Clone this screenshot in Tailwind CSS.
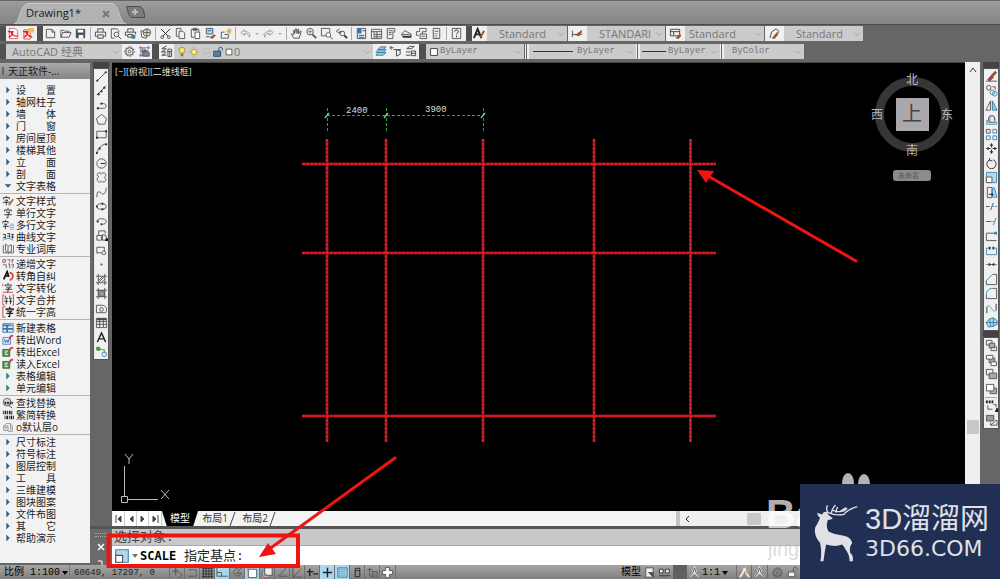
<!DOCTYPE html>
<html lang="zh-CN">
<head>
  <meta charset="UTF-8">
  <meta name="viewport" content="width=device-width, initial-scale=1">
  <title>Drawing1*</title>
  <script src="https://cdn.jsdelivr.net/npm/@tailwindcss/browser@4"></script>
</head>
<body class="relative flex min-h-screen flex-col overflow-x-hidden bg-[#666] font-['Open_Sans','Noto_Sans_CJK_SC',sans-serif] text-[10px] text-[#333]">

  <!-- Icon set, all on a 14x14 grid -->
  <svg class="hidden">
    <symbol id="pdf" viewBox="0 0 14 14"><path d="M2.500 1.500h6l3 3v8h-9z" fill="#fff" stroke="#c66"/><path d="M1 5h6M4 5c1 3 4 5 7 5M6 5c0 3-2 5-4 6" stroke="#d22" stroke-width="1.500"/></symbol>
    <symbol id="pdf2" viewBox="0 0 14 14"><path d="M2 3h7v10H2z" fill="#fdd" stroke="#c66"/><path d="M7 1h6v5H7z" fill="#f5c242" stroke="none"/><path d="M1 5h6M4 5c1 3 4 5 7 6M6 5c0 3-2 5-4 6" stroke="#d22" stroke-width="1.500"/></symbol>
    <symbol id="new" viewBox="0 0 14 14"><path d="M2.500 2.500h6l3 3v6h-9zM8.500 2.500v3h3"/></symbol>
    <symbol id="open" viewBox="0 0 14 14"><path d="M2 11V3.500h3l1 1h5V6M2 11l2-5h9l-2 5z"/></symbol>
    <symbol id="save" viewBox="0 0 14 14"><path d="M2.500 2.500h9v9h-9z" fill="#456" stroke="#345"/><path d="M4 3h6v3H4zM5 8.500h5V12H5z" fill="#fff" stroke="none"/></symbol>
    <symbol id="print" viewBox="0 0 14 14"><path d="M4 5V2h6v3M3 10H1.500V5.500h11V10H11M4 8.500h6V12H4z" stroke="#444"/></symbol>
    <symbol id="preview" viewBox="0 0 14 14"><path d="M6 12H2.500V2h6l2 2v2"/><circle cx="8" cy="8" r="2.500"/><path d="M10 10l3 3" stroke="#333"/></symbol>
    <symbol id="plot" viewBox="0 0 14 14"><path d="M4 5V2h6v3M3 9H1.500V5.500h11V8M4 8h5v3H4z" stroke="#444"/><circle cx="10" cy="10.500" r="2.500" fill="#3b87b5" stroke="none"/></symbol>
    <symbol id="globe" viewBox="0 0 14 14"><path d="M2 4l6 1v7l-5-1z"/><circle cx="8.500" cy="6" r="4" fill="#e9e3b8"/><path d="M5 6h7M8.500 2v8"/></symbol>
    <symbol id="cut" viewBox="0 0 14 14"><path d="M2 2l8 8M12 2L4 10" stroke="#222"/><circle cx="3.500" cy="11" r="1.500"/><circle cx="10.500" cy="11" r="1.500"/></symbol>
    <symbol id="copy" viewBox="0 0 14 14"><path d="M5 10H2.500V1.500h5V4M5.500 4.500h4l2 2v6h-6z"/></symbol>
    <symbol id="paste" viewBox="0 0 14 14"><path d="M6 11H2.500V2.500h8V5" /><path d="M4.500 1.500h4v2h-4z" fill="#666"/><path d="M6.500 5.500h5v7h-5z" fill="#fff"/></symbol>
    <symbol id="match" viewBox="0 0 14 14"><path d="M2.500 1.500h7v6h-7z" fill="#bcd8e8" stroke="#357"/><path d="M4 4h4" stroke="#357"/><path d="M6 11l5-3 2 1-4 4z" fill="#a0562d" stroke="none"/><path d="M2 10.500h4" stroke="#357"/></symbol>
    <symbol id="block" viewBox="0 0 14 14"><path d="M2.500 11.500v-6H6M2 12h8V8M6 8h4"/><path d="M11 1v7M7.500 4.500h6M9 2l4 5M13 2L9 7" stroke="#e0a030"/></symbol>
    <symbol id="undo" viewBox="0 0 14 14"><path d="M6 3L2 6l4 3V7c3 0 5 1 5 4 2-4 0-6-5-6z" stroke="#999"/></symbol>
    <symbol id="redo" viewBox="0 0 14 14"><path d="M8 3l4 3-4 3V7c-3 0-5 1-5 4-2-4 0-6 5-6z" stroke="#999"/></symbol>
    <symbol id="dot" viewBox="0 0 14 14"><path d="M4 6h6l-3 3z" fill="#999" stroke="none"/></symbol>
    <symbol id="pan" viewBox="0 0 14 14"><path d="M4 12L1.500 7.500 4 8V3.500h1V7l1-5h1l.5 5 1-4.500h1L9 7.500l2-3h1L10 12z"/></symbol>
    <symbol id="zoomrt" viewBox="0 0 14 14"><circle cx="5.500" cy="5" r="3.500"/><path d="M8 8l4 4" stroke-width="2"/><path d="M3 5h5M5.500 3v4" stroke="#48a"/></symbol>
    <symbol id="zoomwin" viewBox="0 0 14 14"><path d="M7 9.500H1.500v-8h9V6"/><circle cx="9" cy="8.500" r="2.500" fill="#fff"/><path d="M11 10.500l2.500 2.500" stroke="#333"/></symbol>
    <symbol id="zoomprev" viewBox="0 0 14 14"><path d="M5 2L1.500 4.500 5 7V5h3"/><circle cx="8" cy="7" r="2.500"/><path d="M10 9l3 3" stroke="#333" stroke-width="2"/></symbol>
    <symbol id="props" viewBox="0 0 14 14"><path d="M2.500 1.500h9v11h-9z" stroke="#357"/><path d="M3 2h4v5H3z" fill="#3c77a0" stroke="none"/><path d="M8 4h3M4 9h6M4 11h6" stroke="#357"/></symbol>
    <symbol id="palette" viewBox="0 0 14 14"><path d="M1.500 2.500h11v10h-11zM1.500 5h11M4.500 5v7M7.500 5v7M5 8h7M5 10.500h7"/></symbol>
    <symbol id="tool" viewBox="0 0 14 14"><path d="M2.500 1.500h8v4h-2v7h-6zM4 4h5M4 6h3M4 8h3"/></symbol>
    <symbol id="sheet" viewBox="0 0 14 14"><path d="M1.500 8L5 4l7 3.500v3H3zM2 8h8l2 2"/><path d="M3 10.500h9" stroke="#333" stroke-width="2"/></symbol>
    <symbol id="markup" viewBox="0 0 14 14"><path d="M4 9H1.500V5H5V1.500h7V5H8v3M5.500 7.500h7v5h-7zM7 10h4"/></symbol>
    <symbol id="calc" viewBox="0 0 14 14"><path d="M3.500 1.500h7v11h-7zM5 4.500h4"/><path d="M5 7h4M5 9h4M5 11h4" stroke-dasharray="1"/></symbol>
    <symbol id="help" viewBox="0 0 14 14"><path d="M2.500 1.500h9v11h-9z"/><path d="M5 5c0-2.500 4-2.500 4 0 0 1.500-2 1.500-2 3M7 9.500v1.500" stroke="#222"/></symbol>
    <symbol id="gear" viewBox="0 0 14 14"><circle cx="7" cy="7" r="5" stroke-dasharray="2 1"/><circle cx="7" cy="7" r="4"/><circle cx="7" cy="7" r="1.500"/></symbol>
    <symbol id="wsave" viewBox="0 0 14 14"><path d="M1 3h12M1 11h4M3 1v12M11 1v4" stroke="#679"/><path d="M5 6h5l2 2v4H5z" fill="#789"/><circle cx="6" cy="6" r="2"/></symbol>
    <symbol id="layers" viewBox="0 0 14 14"><path d="M7 1L2 4h5M6 5L1.500 7.500H7M6 9l-4 2h5M8.500 4.500h4v8h-4zM8.500 7h4M10.500 7v5" stroke="#444"/></symbol>
    <symbol id="bulb" viewBox="0 0 14 14"><circle cx="7" cy="5" r="3.500" fill="#f7e27a" stroke="#a98b2c"/><path d="M5.500 9h3v3h-3z" fill="#777"/></symbol>
    <symbol id="sun" viewBox="0 0 14 14"><circle cx="7" cy="7" r="3" fill="#f9ec9c" stroke="#b49a3c"/><path d="M7 1v2M7 11v2M1 7h2M11 7h2M3 3l1 1M10 10l1 1M11 3l-1 1M3 11l1-1" stroke="#b49a3c"/></symbol>
    <symbol id="vpfreeze" viewBox="0 0 14 14"><path d="M3 3h8v5M3 3v5h4M7 8h5v4H7z" stroke="#bbb"/></symbol>
    <symbol id="lock" viewBox="0 0 14 14"><path d="M2 6h8v6H2z" fill="#4c86a8" stroke="#246"/><path d="M8 6V3c0-2 4-2 4 0v2" stroke="#246"/></symbol>
    <symbol id="square" viewBox="0 0 14 14"><path d="M3 3h8v8H3z" fill="#fff" stroke="#333"/></symbol>
    <symbol id="lay1" viewBox="0 0 14 14"><path d="M2 8l3-3h8l-3 3zM2 11l3-3h8l-3 3zM4 5l3-3h6l-3 3z" fill="#9fc6de" stroke="#357fa8"/></symbol>
    <symbol id="lay2" viewBox="0 0 14 14"><path d="M1 3h4M3 1L1 3l2 2M5 5h8M7 5l5 1v4l-4 2v-6" stroke="#444"/></symbol>
    <symbol id="lay3" viewBox="0 0 14 14"><path d="M3 4l3-2.500h5L8 4zM2 7.500h5M2 11h5M8 6.500h4.500v5H8zM8 9h4" stroke="#444"/></symbol>
    <symbol id="chev" viewBox="0 0 14 14"><path d="M3 5l4 4 4-4" stroke="#999"/></symbol>
    <symbol id="textstyle" viewBox="0 0 14 14"><path d="M1 12L5 2l4 10M2.500 8h5" stroke="#222" stroke-width="2"/><path d="M8 11l4-7" stroke="#9a5527" stroke-width="2"/></symbol>
    <symbol id="dimstyle" viewBox="0 0 14 14"><path d="M1.500 4v7M1 8h11M11 4v3" stroke="#555"/><path d="M4 9l8-6-3 7z" fill="#9a5527" stroke="none"/></symbol>
    <symbol id="tablestyle" viewBox="0 0 14 14"><path d="M1.500 2.500h10v7h-10zM1.500 5h10M5 5v4" stroke="#444"/><path d="M7 12l5-5 1 3-3 3z" fill="#9a5527" stroke="none"/></symbol>
    <symbol id="mlstyle" viewBox="0 0 14 14"><path d="M2 12l2-7 5-3 3 3-3 3" stroke="#444"/><path d="M4 12l6-7 1 3-4 5z" fill="#9a5527" stroke="none"/></symbol>

    <!-- draw tools -->
    <symbol id="line" viewBox="0 0 14 14"><path d="M2 12L12 2"/><path d="M1.500 11.500h2M10.500 2.500h2" stroke="#222" stroke-width="2"/></symbol>
    <symbol id="xline" viewBox="0 0 14 14"><path d="M2 12L12 2"/><path d="M3 11h2M6 8h2M9 4h2" stroke="#222" stroke-width="2"/></symbol>
    <symbol id="pline" viewBox="0 0 14 14"><path d="M3 10h6c4 0 4-5 0-5H6"/><path d="M2 10h2M6 5h2" stroke="#222" stroke-width="2"/></symbol>
    <symbol id="polygon" viewBox="0 0 14 14"><path d="M7 1.500L12.500 6l-2 6h-7l-2-6z"/></symbol>
    <symbol id="rect" viewBox="0 0 14 14"><path d="M2 3.500h10v7H2z"/><path d="M1 10.500h2M11 3.500h2" stroke="#222" stroke-width="2"/></symbol>
    <symbol id="arc" viewBox="0 0 14 14"><path d="M2 12C3 7 7 3 12 2"/><path d="M1 12h2M4 7h2M11 2.500h2" stroke="#222" stroke-width="2"/></symbol>
    <symbol id="circle" viewBox="0 0 14 14"><circle cx="7" cy="7" r="5"/><path d="M6 7h5" stroke="#222"/></symbol>
    <symbol id="cloud" viewBox="0 0 14 14"><path d="M4 6C0 4 4 0 7 3c3-3 7 1 3 4 4 2 0 7-3 4-3 3-7-2-3-5z"/></symbol>
    <symbol id="spline" viewBox="0 0 14 14"><path d="M2 12c0-8 3-6 5-4s5 0 5-6"/></symbol>
    <symbol id="ellipse" viewBox="0 0 14 14"><ellipse cx="7" cy="7" rx="5" ry="3"/><path d="M1 7h2M7 4h2M7 10h2" stroke="#333" stroke-width="2"/></symbol>
    <symbol id="elarc" viewBox="0 0 14 14"><path d="M2 7c0-4 10-4 10 0 0 2-2 3-4 3"/><path d="M2 7h2M6 10h2" stroke="#333" stroke-width="2"/></symbol>
    <symbol id="insert" viewBox="0 0 14 14"><path d="M2 7h5v5H2zM4 7V2h7v3M8 6l4 1v5H8z"/><path d="M11 12h2v-2" stroke="#111" stroke-width="2"/></symbol>
    <symbol id="mkblock" viewBox="0 0 14 14"><path d="M2 10V3.500h8v4M2 9.500h5"/><circle cx="9.500" cy="9.500" r="2"/></symbol>
    <symbol id="point" viewBox="0 0 14 14"><path d="M6 6h2v2H6z" fill="#555" stroke="none"/></symbol>
    <symbol id="hatch" viewBox="0 0 14 14"><path d="M1 3.500h12M1 10.500h12M3.500 1v12M10.500 1v12M4 8l4-4M4 10l6-6M7 10l3-3"/></symbol>
    <symbol id="grad" viewBox="0 0 14 14"><path d="M4 4h6v6H4z" fill="#999"/><path d="M1 3.500h12M1 10.500h12M3.500 1v12M10.500 1v12"/></symbol>
    <symbol id="region" viewBox="0 0 14 14"><path d="M1.500 11.500v-8h6c5 0 6 5 4 8z"/><circle cx="7" cy="8" r="2"/></symbol>
    <symbol id="table" viewBox="0 0 14 14"><path d="M1.500 2.500h11v10h-11zM1.500 6h11M1.500 9h11M5 3v9M9 3v9"/><path d="M2 3.500h10" stroke="#444" stroke-width="2"/></symbol>
    <symbol id="mtext" viewBox="0 0 14 14"><path d="M2.500 12L7 2l4.500 10M4 8.500h6" stroke="#222" stroke-width="1.500"/></symbol>
    <symbol id="addsel" viewBox="0 0 14 14"><circle cx="3.500" cy="4" r="2.500" fill="#4a9a40" stroke="none"/><path d="M5 5h5v4" stroke="#4a9a40"/><circle cx="10" cy="10" r="2.500" stroke="#3b8bb8"/></symbol>

    <!-- modify tools -->
    <symbol id="erase" viewBox="0 0 14 14"><path d="M1 12h12"/><path d="M3 10l4-4 2 2-4 4z" fill="#c33"/><path d="M7 7l5-5" stroke="#9a5527" stroke-width="3"/></symbol>
    <symbol id="copyobj" viewBox="0 0 14 14"><circle cx="4" cy="4" r="2.500"/><path d="M8 3h3v3"/><circle cx="8" cy="9" r="2.500" stroke="#3b8bb8"/><circle cx="10.500" cy="10.500" r="2.500" stroke="#3b8bb8"/></symbol>
    <symbol id="mirror" viewBox="0 0 14 14"><path d="M6 2v10H1z"/><path d="M8 2v10h5z" fill="#9fc6de" stroke="#357fa8"/></symbol>
    <symbol id="offset" viewBox="0 0 14 14"><path d="M1.500 12c0-3 3-3 4-3-2-8 7-8 5 0l2 1v2z" stroke="#3b8bb8"/><path d="M1 9c2-1 3-1 3-1-2-7 8-7 6 0M4 10h7"/></symbol>
    <symbol id="array" viewBox="0 0 14 14"><path d="M1.500 1.500h4v4h-4z"/><path d="M8.500 1.500h4v4h-4zM1.500 8.500h4v4h-4zM8.500 8.500h4v4h-4z" stroke="#3b8bb8"/></symbol>
    <symbol id="move" viewBox="0 0 14 14"><path d="M7 2v10M2 7h10" stroke-dasharray="4 2" stroke="#333"/><path d="M5 4l2-3 2 3zM5 10l2 3 2-3zM4 5L1 7l3 2zM10 5l3 2-3 2z" fill="#333" stroke="none"/></symbol>
    <symbol id="rotate" viewBox="0 0 14 14"><path d="M9 3a5 5 0 1 1-4 0M5 1v3h3" stroke="#333"/></symbol>
    <symbol id="scale" viewBox="0 0 14 14"><path d="M1.500 1.500h11v11h-11z" fill="#b5d8ea" stroke="#3b8bb8"/><path d="M1.500 6.500h6v6h-6z" fill="#fff"/></symbol>
    <symbol id="stretch" viewBox="0 0 14 14"><path d="M2.500 1.500h5v11h-5z"/><path d="M8 2h2l3 10H8z" fill="#b5d8ea" stroke="#3b8bb8"/><path d="M4 9h4M7 8l2 1-2 2" stroke="#222"/></symbol>
    <symbol id="trim" viewBox="0 0 14 14"><path d="M1 7h4"/><path d="M6 11l3-8" stroke="#555"/><path d="M8 7h5" stroke="#3b8bb8" stroke-dasharray="2 1"/></symbol>
    <symbol id="extend" viewBox="0 0 14 14"><path d="M1 7h6"/><path d="M8 7h2M9 11l3-8" stroke="#3b8bb8"/></symbol>
    <symbol id="breakpt" viewBox="0 0 14 14"><path d="M11 4.500H1.500v8h11"/><path d="M10 3h3v3h-3z" fill="#3b8bb8" stroke="none"/></symbol>
    <symbol id="break" viewBox="0 0 14 14"><path d="M4 4.500H1.500v7h11v-7H10" stroke="#3b8bb8"/><path d="M4 3h2v3H4zM8 3h2v3H8z" fill="#333" stroke="none"/></symbol>
    <symbol id="join" viewBox="0 0 14 14"><path d="M1 7h12" stroke="#3b8bb8"/><path d="M4 5l3 2-3 2zM10 5L7 7l3 2z" fill="#333" stroke="none"/></symbol>
    <symbol id="chamfer" viewBox="0 0 14 14"><path d="M8 1.500h4.500v11h-11V8"/><path d="M1.500 8L8 1.500" stroke="#3b8bb8"/></symbol>
    <symbol id="fillet" viewBox="0 0 14 14"><path d="M8 1.500h4.500v11h-11V8"/><path d="M1.500 8c0-4 3-6.500 6.500-6.500" stroke="#3b8bb8"/></symbol>
    <symbol id="blend" viewBox="0 0 14 14"><path d="M2 12V5M12 2v7" stroke="#333"/><path d="M2 5c5-4 5 8 10 4" stroke="#4aa"/></symbol>
    <symbol id="explode" viewBox="0 0 14 14"><path d="M1 7l4-4 4-1 4 3v4l-4 2-5 1zM5 3l1 8M9 2v9M2 7h11" fill="#b5d8ea" stroke="#357fa8"/></symbol>
    <symbol id="front" viewBox="0 0 14 14"><path d="M1.500 1.500h6v5h-6zM6.500 8.500h6v4h-6z"/><path d="M4.500 4.500h6v5h-6z" fill="#aaa"/></symbol>
    <symbol id="back" viewBox="0 0 14 14"><path d="M4.500 4.500h6v5h-6z" fill="#aaa"/><path d="M1.500 1.500h7v4h-7zM6.500 8.500h6v4h-6z" fill="#fff"/></symbol>
    <symbol id="above" viewBox="0 0 14 14"><path d="M1.500 1.500h7v6h-7z"/><path d="M4.500 5.500h8v6h-8z" fill="#aaa"/></symbol>
    <symbol id="under" viewBox="0 0 14 14"><path d="M5.500 5.500h7v6h-7z" fill="#aaa"/><path d="M1.500 1.500h8v7h-8z" fill="#fff"/></symbol>
    <symbol id="abcfront" viewBox="0 0 14 14"><path d="M1 3h8" stroke="#222" stroke-width="3" stroke-dasharray="2 1"/><path d="M3 7v4h5M9 6h3v3"/><path d="M11 13h2v-3" stroke="#111" stroke-width="2"/></symbol>
    <symbol id="hatchback" viewBox="0 0 14 14"><path d="M1.500 1.500h8v6h-8z" fill="#99a"/><path d="M6 9v3h7V7h-2M6 12l5-4"/></symbol>

    <!-- side menu -->
    <symbol id="tri" viewBox="0 0 14 14"><path d="M5 3l4 4-4 4z" fill="#2c5f8a" stroke="none"/></symbol>
    <symbol id="tridown" viewBox="0 0 14 14"><path d="M3 5h8l-4 4z" fill="#2c5f8a" stroke="none"/></symbol>
    <symbol id="zi" viewBox="0 0 14 14"><path d="M7 1v2M3 5V3.500h8V5M4.500 6h5L7 8v4.500H5M2.500 9h9" stroke="#222"/></symbol>
    <symbol id="zipen" viewBox="0 0 14 14"><path d="M5 1v2M1.500 5V3h7v2M3 6h4L5 7.500V12M1 8.500h8" stroke="#222"/><path d="M8 12l5-7" stroke="#a06a40" stroke-width="2"/></symbol>
    <symbol id="zilines" viewBox="0 0 14 14"><path d="M4 1v2M1 5V3h6v2M2 6h4L4 7.500V12M1 8.500h7" stroke="#222"/><path d="M9 6h5M9 8h5M9 10h5M9 12h5" stroke="#7aa5cf"/></symbol>
    <symbol id="zicurve" viewBox="0 0 14 14"><path d="M1 4h3v5M1 8l3-1M6 3h3v5M6 6h3M11 4h3M12 4v5M11 7h3" stroke="#223"/><path d="M1 11c4-3 8-3 12 0" stroke="#3b8bb8"/></symbol>
    <symbol id="book" viewBox="0 0 14 14"><path d="M1.500 2.500v9h5l1 1 1-1h5v-9M4 1v8l3 2V4zM7 4l4-2v8l-4 1"/></symbol>
    <symbol id="ziinc" viewBox="0 0 14 14"><path d="M1 2h3v3H1zM6 2h3v3M11 2h3M12 2v4" stroke="#a44"/><path d="M1 8h4v4M7 7h2v5M11 8h3l-2 4" /></symbol>
    <symbol id="ziturn" viewBox="0 0 14 14"><path d="M2 11l4-9 2 6M3 7h4" stroke="#111" stroke-width="2"/><path d="M9 3c5 1 5 7 0 9" stroke="#d43" stroke-width="2"/></symbol>
    <symbol id="zibar" viewBox="0 0 14 14"><path d="M7 1v2M4 5V3.500h7V5M5 6h5L7 8v4H6M4 8.500h8" stroke="#222"/><path d="M1 2v3M1 12h12" stroke="#b44"/></symbol>
    <symbol id="zibox" viewBox="0 0 14 14"><path d="M4 2v2M3 5h4M5 6v6M3 8.500h4M9 2v2M8 5h4M10 6v6M8 8.500h4" stroke="#222"/><path d="M2.500 1H1v12h2M12 1h1.500v12H12" stroke="#c33"/></symbol>
    <symbol id="ziheight" viewBox="0 0 14 14"><path d="M9 1v2M5 5V3.500h8V5M6 6h5L9 8v4H7M5 8.500h8" stroke="#222" stroke-width="1.500"/><path d="M4 1H1v12h3" stroke="#c33"/></symbol>
    <symbol id="newtable" viewBox="0 0 14 14"><path d="M1 2h12v10H1z" fill="#dceaf8" stroke="#3c74b0"/><path d="M1 4h9M1 8h12M6 4v8" stroke="#3c74b0" stroke-width="2"/><path d="M9 1h4v4H9z" fill="#8ab" stroke="none"/></symbol>
    <symbol id="word" viewBox="0 0 14 14"><path d="M1 4h9v8H1z" fill="#dbe7f6" stroke="#5b82b5"/><path d="M3 6l1 4 1.500-3L7 10l1-4" stroke="#2c62a8"/><path d="M9 6c0-3 1-4 4-4" stroke="#d3365a" stroke-width="2"/></symbol>
    <symbol id="excel" viewBox="0 0 14 14"><path d="M1 4h8v8H1z" fill="#4e8c4a" stroke="#356b33"/><path d="M3 6h4M3 8h3M3 10h4" stroke="#fff"/><path d="M9 6c0-3 1-4 4-4" stroke="#d3365a" stroke-width="2"/></symbol>
    <symbol id="trigreen" viewBox="0 0 14 14"><path d="M5 3l4 4-4 4z" fill="#1c8080" stroke="none"/></symbol>
    <symbol id="find" viewBox="0 0 14 14"><circle cx="6" cy="6" r="4.500" fill="#ddd"/><path d="M3 7h10" stroke="#222" stroke-width="3" stroke-dasharray="2 1"/><path d="M8 10l4 3" stroke="#333"/></symbol>
    <symbol id="trans" viewBox="0 0 14 14"><path d="M1 4h12M3 10h11" stroke="#222" stroke-width="4" stroke-dasharray="1 1 2 1"/><path d="M11 3v4" stroke="#c33"/></symbol>
    <symbol id="deflayer" viewBox="0 0 14 14"><path d="M2 6l3-3h5v7M2 6h5v5H2zM10 4l2 2v6H7" stroke="#888"/><path d="M3 8h3" stroke="#3b8bb8"/></symbol>

    <!-- status bar -->
    <symbol id="infer" viewBox="0 0 14 14"><path d="M5 2v8M1 6h8M3 4h4M9 7l3 3-3 3"/></symbol>
    <symbol id="snap" viewBox="0 0 14 14"><path d="M3 4h8v7H3" stroke-dasharray="5 1"/></symbol>
    <symbol id="grid" viewBox="0 0 14 14"><path d="M1 2.500h12M1 5.500h12M1 8.500h12M1 11.500h12M2.500 1v12M5.500 1v12M8.500 1v12M11.500 1v12" stroke="#333"/></symbol>
    <symbol id="ortho" viewBox="0 0 14 14"><path d="M1 2v9h12M1 7h5v4"/></symbol>
    <symbol id="polar" viewBox="0 0 14 14"><path d="M11 7a4 4 0 1 1-3-4M6 8h5M6 8l5-6"/></symbol>
    <symbol id="osnap" viewBox="0 0 14 14"><path d="M2.500 3.500h9v9h-9z" fill="#fff"/><path d="M1 2h3v3H1z" fill="#d77" stroke="none"/></symbol>
    <symbol id="osnap3" viewBox="0 0 14 14"><path d="M4 2h8v8H4zM2 5v7h7" fill="#eee"/><path d="M1 10h3v3H1z" fill="#d77" stroke="none"/></symbol>
    <symbol id="angle" viewBox="0 0 14 14"><path d="M11 2L3 11h9"/></symbol>
    <symbol id="ducs" viewBox="0 0 14 14"><path d="M2 2v10h10M2 12l8-8"/><path d="M10 2l2 3" stroke="#d80" stroke-width="2"/></symbol>
    <symbol id="dyn" viewBox="0 0 14 14"><path d="M4 3v8M1 6h7M8 8.500h5" stroke="#222" stroke-width="1.500"/></symbol>
    <symbol id="plus" viewBox="0 0 14 14"><path d="M7 2v10M2 7h10" stroke="#123" stroke-width="1.500"/></symbol>
    <symbol id="transp" viewBox="0 0 14 14"><path d="M2 2h10v10H2z" stroke="#3b7fb0"/><path d="M3 4h8M3 6h8M3 8h8M3 10h8" stroke="#3b7fb0" stroke-dasharray="1"/></symbol>
    <symbol id="qp" viewBox="0 0 14 14"><path d="M4.500 2.500h5v9h-5zM5 5h4" stroke="#222"/></symbol>
    <symbol id="cycle" viewBox="0 0 14 14"><path d="M1 4h6M4 2v4M4 6v5h3M7 6h5v6H7z"/><path d="M8 8h3v3H8z" fill="#4a9a40" stroke="none"/></symbol>
    <symbol id="cross" viewBox="0 0 14 14"><path d="M5 1.500h4v3.500h3.500v4H9v3.500H5V9H1.500V5H5z" fill="#fff"/></symbol>
    <symbol id="page" viewBox="0 0 14 14"><path d="M3 2h8v10H3z" fill="#eee"/><path d="M6 7h5v5z" fill="#555"/></symbol>
    <symbol id="views" viewBox="0 0 14 14"><path d="M1.500 3.500h4v4h-4zM8 3.500h4v4H8zM1 10.500h12" fill="#eee" stroke="#333"/></symbol>
    <symbol id="anno" viewBox="0 0 14 14"><path d="M7 2v5l-5 4M7 7l5 4M5 7l2-5 2 5" stroke="#eee" stroke-width="2"/><path d="M7 2l-2 6-3 3M7 2l2 6 3 3" stroke="#555"/></symbol>
    <symbol id="anno2" viewBox="0 0 14 14"><path d="M7 2l-2 6-3 4M7 2l2 6 3 4" stroke="#eee" stroke-width="2"/><path d="M8 5h4l-3 4z" fill="#f0a040" stroke="none"/></symbol>
    <symbol id="unlock" viewBox="0 0 14 14"><path d="M2.500 6.500h7v5h-7z" fill="#eee"/><path d="M8 6V3c0-2 4-2 4 0v2"/></symbol>
    <symbol id="ball" viewBox="0 0 14 14"><circle cx="7" cy="7" r="4" fill="#bbb"/></symbol>
  </svg>

  <!-- Document tabs -->
  <header class="flex h-6 items-end border-t border-[#666] bg-linear-to-b from-[#9c9c9c] to-[#858585] pl-3.5">
    <button class="relative flex h-[21px] w-[112px] items-center pl-3 text-[11px] text-[#1c1c1c]">
      <svg class="absolute inset-0 size-full" viewBox="0 0 112 21" preserveAspectRatio="none"><path d="M0 21C6 20 6 1 14 .5h84c7 0 7 19 14 20.500z" fill="#b2b2b2" stroke="#c8c8c8" /></svg>
      <span class="relative flex-1 text-left">Drawing1*</span>
      <svg class="relative mr-4 size-2 stroke-[#777] stroke-2" viewBox="0 0 8 8"><path d="M1 1l6 6M7 1L1 7"/></svg>
    </button>
    <button class="mb-1 h-4 w-[19px]" aria-label="新建图形">
      <svg class="size-full fill-[#7b7b7b] stroke-[#4c4c4c]" viewBox="0 0 19 16"><path d="M.5 2.500h12c4 0 6 4 6 11H6C2 13 2 6 .5 2.500z"/><path d="M9 5v6M6 8h6" stroke="#bbb" stroke-width="2"/></svg>
    </button>
  </header>

  <!-- Toolbars -->
  <div class="flex h-[38px] flex-col gap-[3px] border-t border-[#4c4c4c] pt-px [&_.combo]:relative [&_.combo]:flex [&_.combo]:items-center [&_.combo]:bg-[#cbcbcb] [&_select]:h-[15px] [&_select]:w-full [&_select]:appearance-none [&_select]:text-[#777] [&_.chev]:pointer-events-none [&_.chev]:absolute [&_.chev]:right-px [&_.chev]:size-2.5 [&_.chev]:fill-none">
    <div class="flex h-[15px]">
      <i class="w-1.5 bg-[#505050]"></i>
      <div class="flex w-[31px] bg-[#f0f0f0]" data-icons="pdf pdf2"></div>
      <i class="w-1.5 bg-[#505050]"></i>
      <div class="flex w-[423px] bg-[#f0f0f0]" data-icons="new open save | print preview plot globe | cut copy paste match block | undo dot redo dot | pan zoomrt zoomwin zoomprev | props palette tool sheet markup calc | help"></div>
      <i class="w-1.5 bg-[#505050]"></i>
      <div class="flex w-[15px] bg-[#f0f0f0]" data-icons="textstyle"></div>
      <div class="combo w-[80px] pl-3"><select aria-label="文字样式" class="text-[11px]"><option>Standard</option></select><svg class="chev"><use href="#chev"/></svg></div>
      <i class="ml-px w-0.5 bg-[#eee]"></i>
      <div class="flex w-[17px] bg-[#f0f0f0]" data-icons="dimstyle"></div>
      <div class="combo w-[78px] pl-3"><select aria-label="标注样式" class="text-[11px]"><option>STANDARI</option></select><svg class="chev"><use href="#chev"/></svg></div>
      <i class="ml-px w-0.5 bg-[#eee]"></i>
      <div class="flex w-[17px] bg-[#f0f0f0]" data-icons="tablestyle"></div>
      <div class="combo w-[79px] pl-1"><select aria-label="表格样式" class="text-[11px]"><option>Standard</option></select><svg class="chev"><use href="#chev"/></svg></div>
      <i class="ml-px w-0.5 bg-[#eee]"></i>
      <div class="flex w-[17px] bg-[#f0f0f0]" data-icons="mlstyle"></div>
      <div class="combo w-[79px] pl-3"><select aria-label="多重引线样式" class="text-[11px]"><option>Standard</option></select><svg class="chev"><use href="#chev"/></svg></div>
    </div>
    <div class="flex h-[15px]">
      <i class="w-1.5 bg-[#505050]"></i>
      <div class="combo w-[116px] pl-1.5"><select aria-label="工作空间" class="text-[11px]"><option>AutoCAD 经典</option></select><svg class="chev"><use href="#chev"/></svg></div>
      <div class="flex w-[30px] bg-[#f0f0f0]" data-icons="gear wsave"></div>
      <i class="w-[7px] bg-[#505050]"></i>
      <div class="flex w-[15px] bg-[#f0f0f0]" data-icons="layers"></div>
      <div class="combo w-[199px] fill-none pl-0.5">
        <svg class="size-3 shrink-0"><use href="#bulb"/></svg>
        <svg class="size-3 shrink-0"><use href="#sun"/></svg>
        <svg class="size-3 shrink-0"><use href="#vpfreeze"/></svg>
        <svg class="size-3 shrink-0"><use href="#lock"/></svg>
        <svg class="size-2.5 shrink-0"><use href="#square"/></svg>
        <select aria-label="图层" class="text-[11px]"><option>0</option></select><svg class="chev"><use href="#chev"/></svg>
      </div>
      <div class="flex w-[46px] bg-[#f0f0f0]" data-icons="lay1 lay2 lay3"></div>
      <i class="w-[7px] bg-[#505050]"></i>
      <div class="combo w-[98px] fill-none pl-0.5 font-['Liberation_Mono',monospace]">
        <svg class="size-3 shrink-0"><use href="#square"/></svg>
        <select aria-label="颜色" class="pt-px text-[9px]"><option>ByLayer</option></select><svg class="chev"><use href="#chev"/></svg>
      </div>
      <i class="ml-px w-1 border-r-2 border-l border-[#eee]"></i>
      <div class="combo w-[107px] gap-1 pl-1 font-['Liberation_Mono',monospace]">
        <i class="h-px w-10 shrink-0 bg-[#333]"></i>
        <select aria-label="线型" class="pt-px text-[9px]"><option>ByLayer</option></select><svg class="chev"><use href="#chev"/></svg>
      </div>
      <i class="w-1 border-r-2 border-l border-[#eee]"></i>
      <div class="combo w-[80px] gap-0.5 pl-0.5 font-['Liberation_Mono',monospace]">
        <i class="h-px w-6 shrink-0 bg-[#333]"></i>
        <select aria-label="线宽" class="pt-px text-[9px]"><option>ByLayer</option></select><svg class="chev"><use href="#chev"/></svg>
      </div>
      <i class="w-1 border-r-2 border-l border-[#eee]"></i>
      <div class="combo w-[80px] pl-2 font-['Liberation_Mono',monospace]"><select aria-label="打印样式" class="pt-px text-[9px]"><option>ByColor</option></select><svg class="chev"><use href="#chev"/></svg></div>
    </div>
  </div>

  <main class="flex flex-1">
    <!-- Screen menu -->
    <aside class="mb-0.5 flex w-[90px] shrink-0 flex-col bg-[#f2f2f2]">
      <h2 class="h-[17px] border-t border-[#666] bg-linear-to-b from-[#aaa] to-[#858585] pl-2 leading-[17px] text-[#1c1c1c]"><i class="absolute left-0.5 mt-1 h-2 w-0.5 bg-[#666]"></i>天正软件-...</h2>
      <nav class="flex flex-col pt-[5px] text-[#222] [&>button]:flex [&>button]:h-3 [&>button]:items-center [&>button]:gap-0.5 [&>button]:pl-0.5 [&>button]:leading-3 [&>button]:whitespace-nowrap [&_svg]:size-3 [&_svg]:shrink-0 [&_svg]:fill-none [&_svg]:stroke-[#555] [&>hr]:mt-px [&>hr]:border-[#b5b5b5]">
        <button><svg><use href="#tri"/></svg>设　　置</button>
        <button><svg><use href="#tri"/></svg>轴网柱子</button>
        <button><svg><use href="#tri"/></svg>墙　　体</button>
        <button><svg><use href="#tri"/></svg>门　　窗</button>
        <button><svg><use href="#tri"/></svg>房间屋顶</button>
        <button><svg><use href="#tri"/></svg>楼梯其他</button>
        <button><svg><use href="#tri"/></svg>立　　面</button>
        <button><svg><use href="#tri"/></svg>剖　　面</button>
        <button><svg><use href="#tridown"/></svg>文字表格</button>
        <hr class="mb-px">
        <button><svg><use href="#zipen"/></svg>文字样式</button>
        <button><svg><use href="#zi"/></svg>单行文字</button>
        <button><svg><use href="#zilines"/></svg>多行文字</button>
        <button><svg><use href="#zicurve"/></svg>曲线文字</button>
        <button><svg><use href="#book"/></svg>专业词库</button>
        <hr class="mb-px">
        <button><svg><use href="#ziinc"/></svg>递增文字</button>
        <button><svg><use href="#ziturn"/></svg>转角自纠</button>
        <button><svg><use href="#zibar"/></svg>文字转化</button>
        <button><svg><use href="#zibox"/></svg>文字合并</button>
        <button><svg><use href="#ziheight"/></svg>统一字高</button>
        <hr class="mb-0.5">
        <button><svg><use href="#newtable"/></svg>新建表格</button>
        <button><svg><use href="#word"/></svg>转出Word</button>
        <button><svg><use href="#excel"/></svg>转出Excel</button>
        <button><svg><use href="#excel"/></svg>读入Excel</button>
        <button><svg><use href="#trigreen"/></svg>表格编辑</button>
        <button><svg><use href="#trigreen"/></svg>单元编辑</button>
        <hr class="mb-px">
        <button><svg><use href="#find"/></svg>查找替换</button>
        <button><svg><use href="#trans"/></svg>繁简转换</button>
        <button><svg><use href="#deflayer"/></svg>o默认层o</button>
        <hr class="mb-px">
        <button><svg><use href="#tri"/></svg>尺寸标注</button>
        <button><svg><use href="#tri"/></svg>符号标注</button>
        <button><svg><use href="#tri"/></svg>图层控制</button>
        <button><svg><use href="#tri"/></svg>工　　具</button>
        <button><svg><use href="#tri"/></svg>三维建模</button>
        <button><svg><use href="#tri"/></svg>图块图案</button>
        <button><svg><use href="#tri"/></svg>文件布图</button>
        <button><svg><use href="#tri"/></svg>其　　它</button>
        <button><svg><use href="#tri"/></svg>帮助演示</button>
      </nav>
    </aside>

    <div class="flex min-w-0 flex-1 flex-col">
      <div class="flex flex-1">
        <!-- Draw toolbar -->
        <div class="w-[22px] shrink-0 pl-[3px]">
          <i class="block h-1.5 w-4 bg-[#444]"></i>
          <div class="flex h-[292px] w-4 flex-col items-center justify-around border border-[#555] bg-[#f0f0f0]" data-icons="line xline pline polygon rect arc circle cloud spline ellipse elarc insert mkblock point hatch grad region table mtext addsel"></div>
        </div>

        <div class="flex min-w-0 flex-1 flex-col">
          <div class="flex flex-1">
            <!-- Model space -->
            <div class="min-w-0 flex-1 border-t border-[#444] bg-black">
              <svg class="block w-full fill-none" viewBox="112 63 853 448">
                <text x="115" y="75" font-size="9" fill="#ddd">[−][俯视][二维线框]</text>
                <g stroke="#8a0f14" stroke-width="3">
                  <path id="axes" d="M302 164H716M302 253H716M302 416H716M327 139V442M386 139V442M483 139V442M594 139V442M690.500 139V442"/>
                </g>
                <use href="#axes" stroke="#f0262c" stroke-width="1.500" stroke-dasharray="3 1"/>
                <path d="M327 115.500H483M327.500 108V133M386.500 108V133M483.500 108V133" stroke="#35a340" stroke-dasharray="3 2"/>
                <path d="M325 118l4-5M384 118l4-5M481 118l4-5" stroke="#6fd07a" stroke-width="1.500"/>
                <g font-family="Liberation Mono, monospace" font-size="9" fill="#ddd">
                  <text x="346" y="113">2400</text>
                  <text x="425" y="112">3900</text>
                </g>
                <!-- UCS icon -->
                <path d="M121.500 496.500h6v6h-6zM124.500 496V466M128 499.500h30M125 454l4 5 4-5M129 459v5M161 490l8 9M169 490l-8 9" stroke="#bbb"/>
                <!-- ViewCube -->
                <circle cx="912.500" cy="114.500" r="33" stroke="#363636" stroke-width="9"/>
                <rect x="896" y="98" width="33" height="33" fill="#a9a9ac"/>
                <g text-anchor="middle" font-size="12" fill="#b8b8b8">
                  <text x="912" y="84">北</text>
                  <text x="877" y="119">西</text>
                  <text x="947" y="119">东</text>
                  <text x="912" y="155">南</text>
                  <text x="912" y="121" font-size="20" fill="#444">上</text>
                </g>
                <rect x="893" y="170" width="38" height="11" rx="3" fill="#8b8b90"/>
                <text x="898" y="178" font-size="7" fill="#555">未命名</text>
              </svg>
            </div>
            <!-- Vertical scrollbar -->
            <div class="flex w-[15px] shrink-0 flex-col items-center bg-[#efefef] pt-1">
              <svg class="size-2 fill-none stroke-[#333]" viewBox="0 0 8 8"><path d="M1 6l3-4 3 4"/></svg>
              <i class="mt-auto mb-[77px] h-3.5 w-3 bg-[#c8c8c8]"></i>
            </div>
          </div>

          <!-- Layout tabs -->
          <div class="flex h-[15px] items-center bg-[#f4f4f4] pl-px">
            <div class="flex h-[15px] divide-x divide-[#ccc] border-r border-[#ccc] bg-white [&>button]:w-3 [&_svg]:mx-auto [&_svg]:size-2 [&_svg]:fill-[#444] [&_svg]:stroke-[#444]">
              <button aria-label="第一个"><svg viewBox="0 0 8 8"><path d="M1 0v8"/><path d="M6 1v6L3 4z"/></svg></button>
              <button aria-label="上一个"><svg viewBox="0 0 8 8"><path d="M6 1v6L3 4z"/></svg></button>
              <button aria-label="下一个"><svg viewBox="0 0 8 8"><path d="M2 1v6l3-3z"/></svg></button>
              <button aria-label="最后一个"><svg viewBox="0 0 8 8"><path d="M7 0v8"/><path d="M2 1v6l3-3z"/></svg></button>
            </div>
            <button class="relative h-[15px] w-9 text-white"><svg class="absolute inset-0 size-full" viewBox="0 0 38 15" preserveAspectRatio="none"><path d="M0 0h38l-5 15H5z"/></svg><span class="relative">模型</span></button>
            <button class="w-[30px] text-right whitespace-nowrap">布局1</button>
            <svg class="h-[15px] w-2 stroke-[#444]" viewBox="0 0 8 15"><path d="M2 15L7 1"/></svg>
            <button class="w-8 text-right whitespace-nowrap">布局2</button>
            <svg class="h-[15px] w-2 stroke-[#444]" viewBox="0 0 8 15"><path d="M2 15L7 1"/></svg>
            <div class="ml-auto flex h-[15px] w-[304px] items-center border-l-4 border-[#c4c4c4] bg-[#efefef] pl-1">
              <svg class="size-2 fill-none stroke-[#222]" viewBox="0 0 8 8"><path d="M5 1L2 4l3 3"/></svg>
              <i class="ml-[55px] h-3 w-3.5 bg-[#c8c8c8]"></i>
            </div>
          </div>
        </div>

        <!-- Modify toolbar -->
        <div class="w-5 shrink-0 pl-[3px]">
          <i class="block h-1.5 w-4 bg-[#444]"></i>
          <div class="flex h-[263px] w-4 flex-col items-center justify-around border border-[#555] bg-[#f0f0f0]" data-icons="erase copyobj mirror offset array move rotate scale stretch trim extend breakpt break join chamfer fillet blend explode"></div>
          <i class="block h-1.5 w-4 bg-[#444]"></i>
          <div class="flex h-[92px] w-4 flex-col items-center justify-around border border-[#555] bg-[#f0f0f0]" data-icons="front back above under - abcfront hatchback"></div>
        </div>
      </div>

      <!-- Command line -->
      <div class="flex border-t-3 border-[#555]">
        <div class="flex w-[22px] shrink-0 flex-col items-center justify-between bg-[#6a6a6a] pt-1">
          <i class="h-1 w-3 border-y border-dotted border-[#aaa]"></i>
          <svg class="size-2 fill-none stroke-white stroke-[1.500]" viewBox="0 0 8 8"><path d="M1 1l6 6M7 1L1 7"/></svg>
          <svg class="size-2 fill-none stroke-white" viewBox="0 0 8 8"><path d="M1 4h4v4"/></svg>
        </div>
        <div class="flex-1">
          <p class="h-4 overflow-hidden bg-[#c8c8c8] pl-0.5 font-['DejaVu_Sans_Mono','Noto_Sans_CJK_SC',monospace] text-[13px] leading-4 text-[#444]">选择对象:</p>
          <div class="flex h-5 items-center gap-0.5 border-t border-[#aaa] bg-white pl-0.5 font-['DejaVu_Sans_Mono','Noto_Sans_CJK_SC',monospace] text-[13px] text-[#222]">
            <svg class="size-4 fill-none stroke-[#555]"><use href="#scale"/></svg>
            <svg class="h-1 w-1.5 fill-[#777]" viewBox="0 0 6 4"><path d="M0 0h6L3 4z"/></svg>
            <label for="cmd" class="whitespace-nowrap"><b class="text-[12px] text-black">SCALE</b> 指定基点:</label>
            <input id="cmd" type="text" class="min-w-0 flex-1 outline-none">
          </div>
        </div>
      </div>
    </div>
  </main>

  <!-- Status bar -->
  <footer class="flex h-3.5 items-end overflow-hidden bg-linear-to-b from-[#a5a5a5] to-[#808080] font-['Liberation_Mono','Noto_Sans_CJK_SC',monospace] leading-3 whitespace-nowrap text-black">
    <button class="flex w-[69px] items-center gap-0.5 pl-1"><span>比例 1:100</span><svg class="h-1 w-1.5" viewBox="0 0 6 4"><path d="M0 0h6L3 4z"/></svg></button>
    <output class="h-3.5 w-[100px] border-l border-[#777] pl-1 text-[9px] leading-[17px] text-[#222]">60649, 17297, 0</output>
    <div class="flex h-3.5 divide-x divide-[#6f6f6f] border-x border-[#6f6f6f]" data-icons="infer snap grid *ortho polar *osnap osnap3 angle ducs dyn *plus *transp qp cycle cross"></div>
    <div class="ml-auto flex h-3.5 w-[384px] items-end pl-1">
      <button class="w-[22px]">模型</button>
      <div class="flex h-3.5 w-[31px]" data-icons="page views"></div>
      <i class="h-3.5 w-3.5 bg-[#606060]"></i>
      <div class="flex h-3.5 w-[15px]" data-icons="anno"></div>
      <button class="flex items-center gap-0.5 pr-2"><span>1:1</span><svg class="h-1 w-1.5" viewBox="0 0 6 4"><path d="M0 0h6L3 4z"/></svg></button>
      <div class="flex h-3.5 divide-x divide-[#6f6f6f] border-x border-[#6f6f6f]" data-icons="anno2 anno"></div>
      <div class="flex h-3.5 pl-0.5" data-icons="gear unlock ball"></div>
    </div>
  </footer>

  <!-- Callouts -->
  <svg class="pointer-events-none absolute inset-x-0 top-0 w-full" viewBox="0 0 1000 579">
    <g fill="none" stroke="#ee1511">
      <path d="M108.500 535.500h189.500v30.500h-189.500z" stroke-width="4"/>
      <path d="M395 458L268 550M856 261L708 176" stroke-width="3" stroke-linecap="round"/>
    </g>
    <path d="M259 557l9-14 8 11zM697 170l17 1-8 12z" fill="#ee1511"/>
    <g fill="#fff" fill-opacity=".7" font-family="Liberation Sans, sans-serif">
      <ellipse cx="848" cy="483" rx="6" ry="10"/>
      <ellipse cx="864" cy="484" rx="6" ry="10"/>
      <text x="766" y="528" font-size="41" font-weight="bold">Ba</text>
      <text x="768" y="556" font-size="20" fill="#ccc">jing</text>
    </g>
  </svg>

  <a href="#" class="absolute right-0 bottom-0 flex h-[95px] w-[200px] items-center gap-1.5 bg-[#222f55] pl-3 text-[#dfe1e6]">
    <svg class="h-[62px] w-[47px] shrink-0 fill-none stroke-current stroke-[4]" viewBox="450 120 140 185">
      <path d="M465 155L480 160Q484 150 494 153Q498 164 512 171Q508 177 497 177Q490 200 500 212Q520 222 545 224Q566 228 570 245Q560 255 564 275Q574 280 572 300L562 300Q562 280 550 265Q545 255 540 250Q520 258 492 250Q488 270 484 300L475 300Q480 270 474 245Q455 225 459 200Q468 185 474 170Q466 165 465 155z" fill="currentColor" stroke="none"/>
      <path d="M494 153Q520 165 545 160Q556 145 585 137M498 155Q490 145 496 133M508 157Q508 145 520 132M520 154L526 138M512 148Q540 158 555 142M535 150L552 140"/>
    </svg>
    <span class="flex flex-col font-['Liberation_Sans','Noto_Sans_CJK_SC',sans-serif] whitespace-nowrap">
      <span class="text-[29px] leading-[34px]">3D溜溜网</span>
      <span class="font-['DejaVu_Sans',sans-serif] text-[22px] leading-[26px]">3D66.COM</span>
    </span>
  </a>

  <script>
    // Fill each toolbar from its icon list: "|" and "-" are separators, "*" marks a mode that is on
    document.querySelectorAll('[data-icons]').forEach(bar => {
      bar.dataset.icons.split(' ').forEach(name => {
        if (name === '|' || name === '-') {
          const sep = document.createElement('i');
          sep.className = name === '|' ? 'mx-0.5 my-px w-px shrink-0 bg-[#aaa]' : 'h-px w-3 shrink-0 bg-[#aaa]';
          bar.appendChild(sep);
          return;
        }
        const on = name.startsWith('*');
        const id = name.replace('*', '');
        const button = document.createElement('button');
        button.setAttribute('aria-label', id);
        button.className = 'flex h-3.5 shrink-0 items-center justify-center ' +
          (id === 'dot' ? 'w-2 ' : 'w-[15px] ') + (on ? 'bg-[#a9d6ea]' : '');
        button.innerHTML = `<svg class="size-[13px] fill-none stroke-[#555]"><use href="#${id}"/></svg>`;
        bar.appendChild(button);
      });
    });
  </script>
</body>
</html>
